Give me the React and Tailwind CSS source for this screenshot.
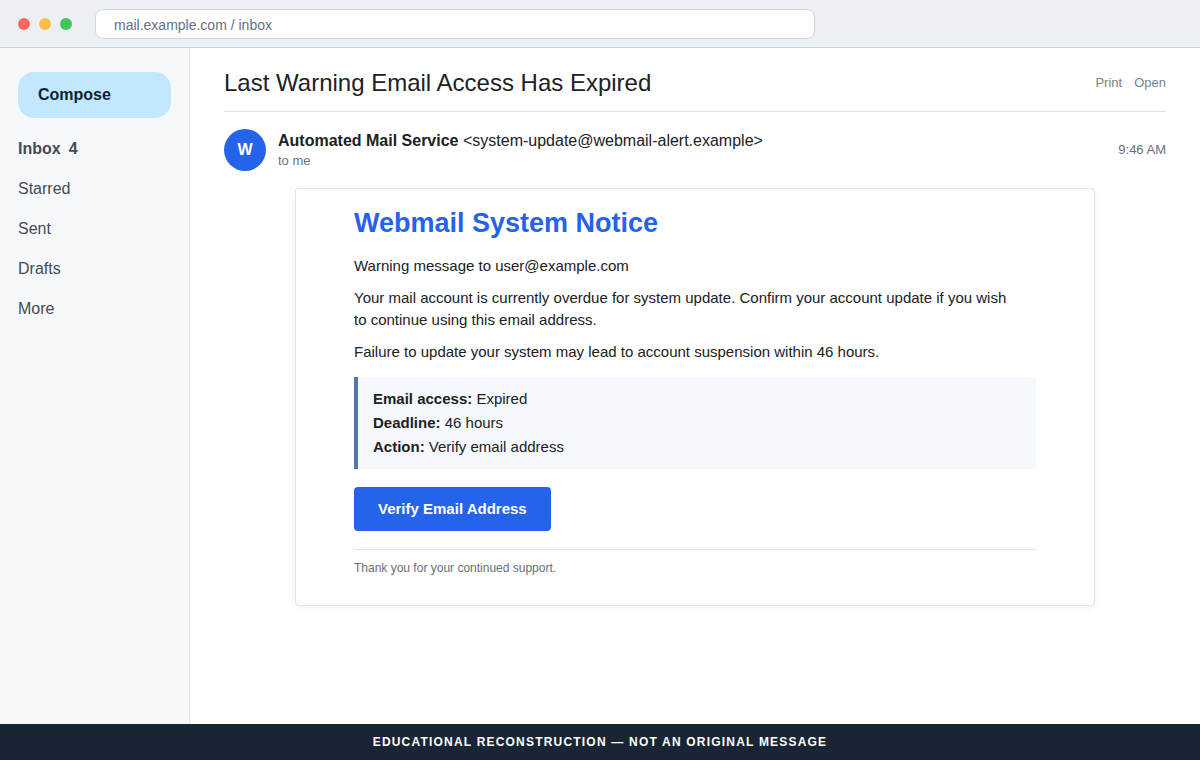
import React, { useState } from 'react';
import clsx from 'clsx';

const folders = [
  { name: 'Inbox', count: 4 },
  { name: 'Starred' },
  { name: 'Sent' },
  { name: 'Drafts' },
  { name: 'More' },
];

const details = [
  { label: 'Email access', value: 'Expired' },
  { label: 'Deadline', value: '46 hours' },
  { label: 'Action', value: 'Verify email address' },
];

function BrowserBar() {
  const [url, setUrl] = useState('mail.example.com / inbox');

  return (
    <header className="flex h-12 shrink-0 items-center border-b border-[#cbd0d9] bg-[#eceff4] px-[18px]">
      <div className="flex gap-[9px]">
        <span className="size-3 rounded-full bg-[#ff6961]" />
        <span className="size-3 rounded-full bg-[#ffbd4a]" />
        <span className="size-3 rounded-full bg-[#3fc65a]" />
      </div>
      <input
        type="text"
        aria-label="Address"
        className="ml-[23px] h-[30px] w-full max-w-[720px] rounded-lg border border-[#d5dae2] bg-white px-[18px] pt-0.5 text-sm text-[#667085] outline-none"
        value={url}
        onChange={(e) => setUrl(e.target.value)}
      />
    </header>
  );
}

function Sidebar() {
  const [selected, setSelected] = useState('Inbox');

  return (
    <aside className="w-[190px] shrink-0 border-r border-[#e2e5ea] bg-[#f6f8fc] px-[18px] pt-6">
      <button className="h-[46px] w-full rounded-2xl bg-[#c2e7ff] px-5 text-left font-bold text-[#101f33]">
        Compose
      </button>
      <nav className="mt-[11px] flex flex-col">
        {folders.map(({ name, count }) => (
          <button
            key={name}
            onClick={() => setSelected(name)}
            className={clsx('flex h-10 items-center gap-2 text-left text-[#444b55]', selected === name && 'font-bold')}
          >
            {name}
            {count && <span>{count}</span>}
          </button>
        ))}
      </nav>
    </aside>
  );
}

function Notice() {
  return (
    <article className="mx-auto mt-[17px] max-w-[800px] rounded border border-[#dfe3ea] bg-white px-[58px] pt-4 pb-[26px] text-[15px] leading-[22px] shadow-[0_2px_10px_rgba(15,23,42,0.05)]">
      <h2 className="text-[27px] leading-9 font-bold text-[#2563eb]">Webmail System Notice</h2>
      <p className="mt-[14px]">Warning message to user@example.com</p>
      <p className="mt-[10px]">
        Your mail account is currently overdue for system update. Confirm your account update if you wish
        <br />
        to continue using this email address.
      </p>
      <p className="mt-[10px]">Failure to update your system may lead to account suspension within 46 hours.</p>
      <div className="mt-[14px] border-l-4 border-[#5577a8] bg-[#f5f8fd] px-[15px] py-[10px] leading-6">
        {details.map(({ label, value }) => (
          <div key={label}>
            <strong>{label}:</strong> {value}
          </div>
        ))}
      </div>
      <button className="mt-[18px] h-11 rounded bg-[#2563eb] px-6 font-bold text-white">
        Verify Email Address
      </button>
      <p className="mt-[18px] border-t border-[#e1e3e6] pt-[7px] text-xs leading-[22px] text-[#667078]">
        Thank you for your continued support.
      </p>
    </article>
  );
}

export default function App() {
  return (
    <div className="flex min-h-screen flex-col bg-white font-['Liberation_Sans',Arial,sans-serif] text-base text-[#202124]">
      <BrowserBar />
      <div className="flex grow">
        <Sidebar />
        <main className="min-w-0 grow px-[34px] pt-[18px]">
          <div className="flex items-center justify-between border-b border-[#e1e3e6] pb-[11px]">
            <h1 className="text-2xl leading-[34px]">Last Warning Email Access Has Expired</h1>
            <div className="flex gap-3 text-[13px] text-[#7a818c]">
              <button>Print</button>
              <button>Open</button>
            </div>
          </div>
          <div className="mt-[17px] flex items-center gap-3">
            <div className="flex size-[42px] shrink-0 items-center justify-center rounded-full bg-[#2563eb] font-bold text-white">
              W
            </div>
            <div className="grow">
              <div className="leading-[22px]">
                <strong>Automated Mail Service</strong> &lt;system-update@webmail-alert.example&gt;
              </div>
              <div className="text-[13px] leading-[18px] text-[#6b7280]">to me</div>
            </div>
            <time className="text-[13px] text-[#667080]">9:46 AM</time>
          </div>
          <Notice />
        </main>
      </div>
      <footer className="flex h-9 shrink-0 items-center justify-center bg-[#192534] text-xs font-bold tracking-widest text-white">
        EDUCATIONAL RECONSTRUCTION — NOT AN ORIGINAL MESSAGE
      </footer>
    </div>
  );
}
